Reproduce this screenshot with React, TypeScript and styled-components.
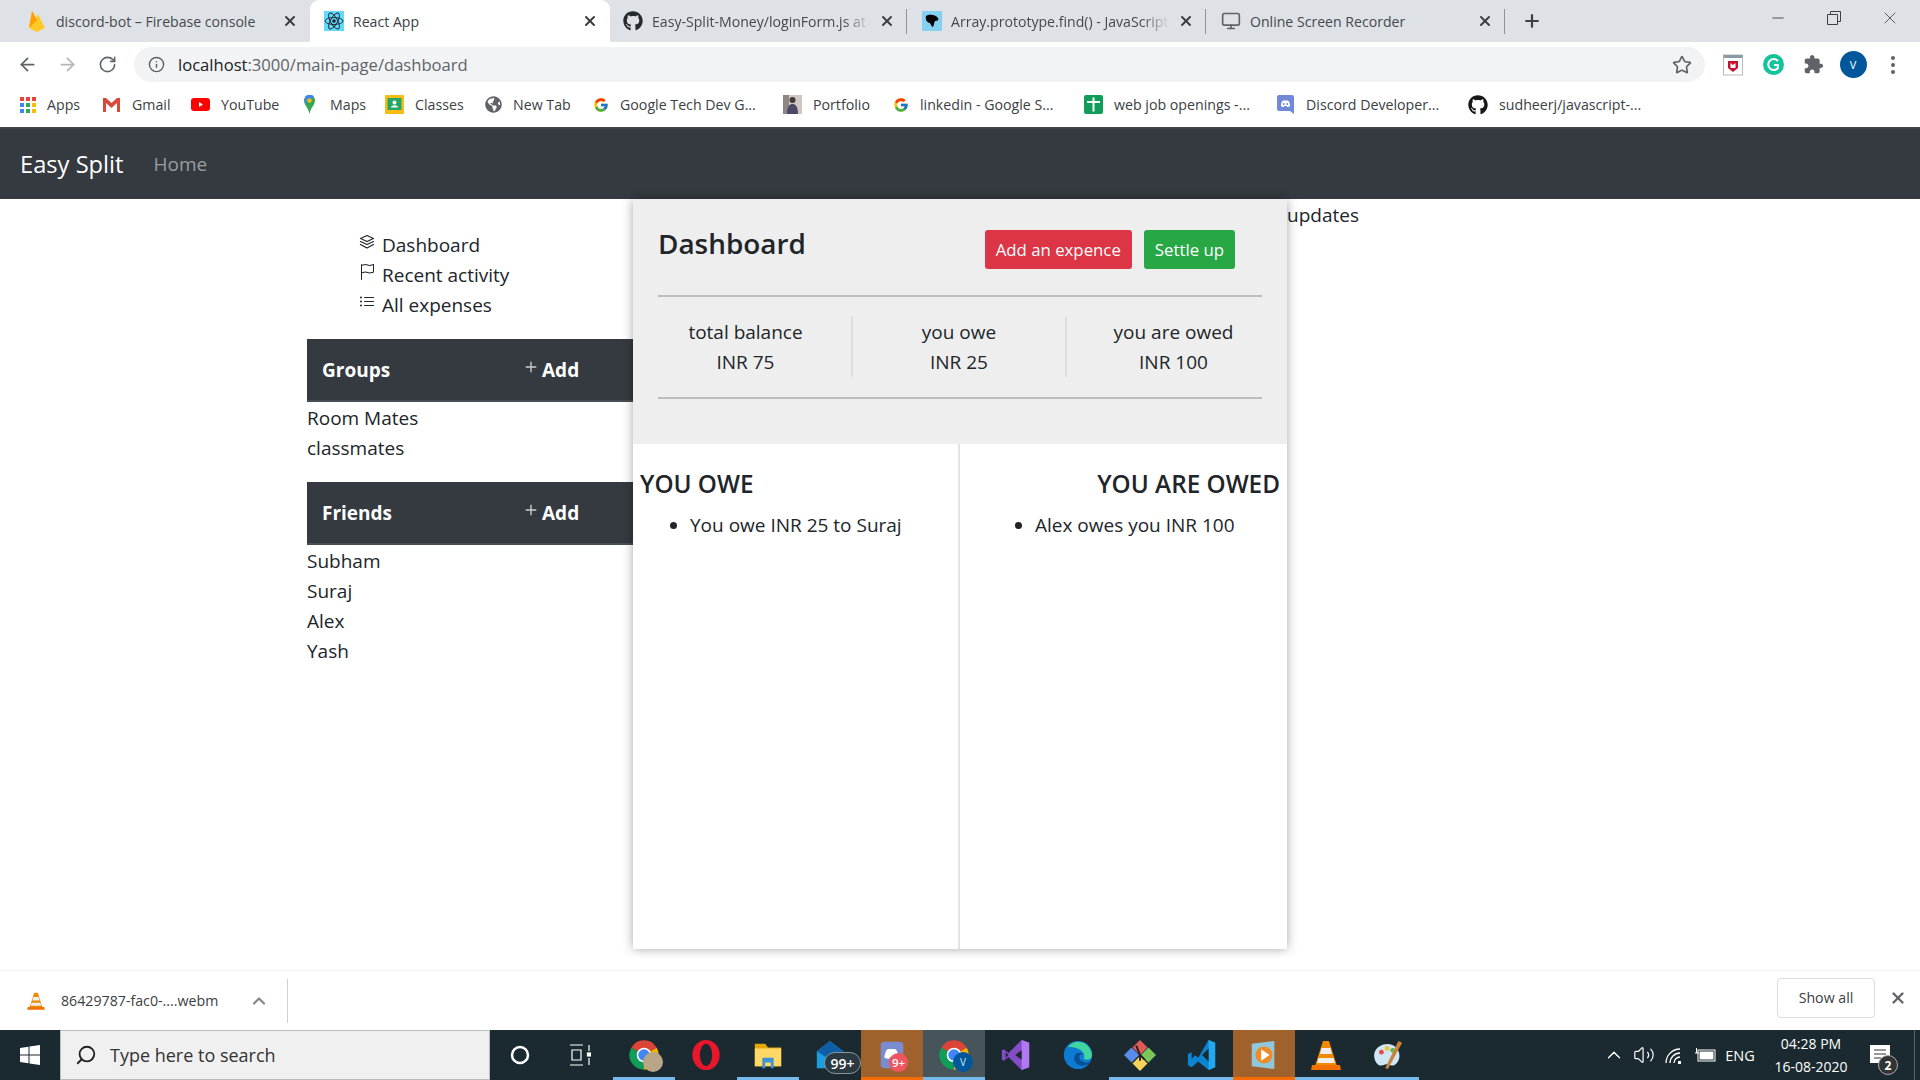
import React from 'react';
import styled, { createGlobalStyle } from 'styled-components';
import { BsFlag, BsListUl, BsPlus } from 'react-icons/bs';
import { FaGithub, FaGlobeAmericas } from 'react-icons/fa';
import { FcGoogle } from 'react-icons/fc';
import {
  ArrowLeft,
  ArrowRight,
  RotateCw,
  Info,
  Star,
  X,
  Plus,
  Minus,
  ChevronUp,
  Search,
  Monitor,
  Volume2,
} from 'lucide-react';

const GlobalStyle = createGlobalStyle`
  html, body {
    margin: 0;
    padding: 0;
    width: 1920px;
    height: 1080px;
    overflow: hidden;
    background: #fff;
    font-family: "Open Sans", "Noto Sans", sans-serif;
    color: #212529;
  }
  * {
    box-sizing: border-box;
  }
`;

/* browser chrome */

const Shell = styled.div`
  width: 1920px;
  height: 1080px;
  display: flex;
  flex-direction: column;
  overflow: hidden;
`;

const TabStrip = styled.div`
  height: 42px;
  flex: none;
  display: flex;
  padding-left: 10px;
  background: #dee1e6;
`;

const Tab = styled.div<{ $active?: boolean; $width: number; $pad: number; $divider?: boolean }>`
  width: ${(p) => p.$width}px;
  height: 42px;
  display: flex;
  align-items: center;
  gap: 9px;
  padding: 0 12px 0 ${(p) => p.$pad}px;
  font-size: 14.1px;
  color: ${(p) => (p.$active ? '#3c4043' : '#45494d')};
  background: ${(p) => (p.$active ? '#fff' : 'transparent')};
  border-radius: 9px 9px 0 0;
  position: relative;

  &::after {
    content: '';
    display: ${(p) => (p.$divider ? 'block' : 'none')};
    position: absolute;
    right: 0;
    top: 9px;
    height: 25px;
    width: 1px;
    background: #8f9296;
  }
`;

const TabTitle = styled.span<{ $fade?: boolean }>`
  flex: 1;
  white-space: nowrap;
  ${(p) =>
    p.$fade &&
    'mask-image: linear-gradient(90deg, #000 88%, transparent 100%);'}
`;

const TabClose = styled(X)`
  flex: none;
  width: 16px;
  height: 16px;
  color: #3c4043;
  stroke-width: 3;
`;

const NewTab = styled(Plus)`
  width: 20px;
  height: 20px;
  margin: 11px 0 0 17px;
  color: #3c4043;
  stroke-width: 2.6;
`;

const WindowControls = styled.div`
  margin-left: auto;
  display: flex;
  height: 36px;
  align-items: center;
  padding-right: 2px;
`;

const WindowButton = styled.div`
  width: 56px;
  display: flex;
  justify-content: center;
  color: #3c4043;
`;

const RestoreIcon = styled.svg`
  width: 14px;
  height: 14px;
`;

const Toolbar = styled.div`
  height: 40px;
  flex: none;
  display: flex;
  align-items: center;
  background: #fff;
  padding-top: 5px;
`;

const NavIcon = styled.div<{ $muted?: boolean }>`
  width: 40px;
  display: flex;
  justify-content: center;
  color: ${(p) => (p.$muted ? '#b4b6b9' : '#5f6368')};
  &:first-child {
    margin-left: 7px;
  }
`;

const Omnibox = styled.div`
  width: 1571px;
  height: 35px;
  margin-left: 7px;
  display: flex;
  align-items: center;
  padding: 0 13px 0 14px;
  border-radius: 18px;
  background: #f1f3f4;
  font-size: 16.6px;
  color: #5f6368;
`;

const UrlHost = styled.span`
  color: #202124;
`;

const OmniInfo = styled(Info)`
  width: 17px;
  height: 17px;
  margin-right: 13px;
  color: #5f6368;
`;

const OmniStar = styled(Star)`
  width: 20px;
  height: 20px;
  margin-left: auto;
  color: #5f6368;
`;

const ExtensionRow = styled.div`
  display: flex;
  align-items: center;
  margin-left: 8px;
`;

const ExtensionSlot = styled.div`
  width: 40px;
  display: flex;
  justify-content: center;
  align-items: center;
`;

const Avatar = styled.div`
  width: 27px;
  height: 27px;
  border-radius: 50%;
  background: #01579b;
  color: #fff;
  font-size: 11px;
  display: flex;
  align-items: center;
  justify-content: center;
`;

const Dots = styled.div`
  display: flex;
  flex-direction: column;
  gap: 3px;
  i {
    width: 4px;
    height: 4px;
    border-radius: 50%;
    background: #5f6368;
  }
`;

const BookmarkBar = styled.div`
  height: 47px;
  flex: none;
  display: flex;
  align-items: center;
  padding-left: 20px;
  background: #fff;
  border-bottom: 2px solid #3f4449;
`;

const Bookmark = styled.div<{ $width: number }>`
  width: ${(p) => p.$width}px;
  display: flex;
  align-items: center;
  gap: 11px;
  font-size: 14.2px;
  color: #3c4043;
  white-space: nowrap;
`;

const AppsGrid = styled.div`
  width: 16px;
  height: 16px;
  display: grid;
  grid-template-columns: repeat(3, 4px);
  grid-auto-rows: 4px;
  gap: 2px;
`;

const AppsDot = styled.i<{ $color: string }>`
  background: ${(p) => p.$color};
`;

const BookmarkSvg = styled.svg`
  width: 19px;
  height: 19px;
  flex: none;
`;

/* page */

const Page = styled.div`
  flex: 1;
  min-height: 0;
  display: flex;
  flex-direction: column;
  background: #fff;
`;

const Navbar = styled.nav`
  height: 70px;
  flex: none;
  display: flex;
  align-items: center;
  gap: 30px;
  padding: 0 20px;
  background: #343a40;
`;

const Brand = styled.span`
  font-size: 23.7px;
  color: #fff;
`;

const NavLink = styled.span`
  font-size: 19px;
  color: rgba(255, 255, 255, 0.5);
`;

const Columns = styled.div`
  flex: 1;
  display: grid;
  grid-template-columns: 307px 326px 654px 1fr;
  align-items: start;
`;

const Sidebar = styled.aside`
  grid-column: 2;
  padding-top: 31px;
  font-size: 19px;
`;

const SideMenu = styled.div`
  padding-left: 52px;
  margin-bottom: 19px;
`;

const SideRow = styled.div`
  height: 30px;
  display: flex;
  align-items: center;
  gap: 7px;
  color: #212529;
  svg {
    width: 16px;
    height: 16px;
    margin-top: -7px;
  }
`;

const SectionBar = styled.div`
  height: 63px;
  display: grid;
  grid-template-columns: 198px 1fr;
  align-items: center;
  padding-left: 15px;
  background: #343a40;
  border-bottom: 2px solid #454d55;
  color: #fff;
  font-weight: 700;
  font-size: 19px;
`;

const AddLabel = styled.span`
  display: flex;
  align-items: center;
  svg {
    width: 22px;
    height: 22px;
    margin-top: -6px;
    color: #ccc;
  }
`;

const NameList = styled.div<{ $spaced?: boolean }>`
  padding-top: 1px;
  margin-bottom: ${(p) => (p.$spaced ? '19px' : '0')};
`;

const NameRow = styled.div`
  height: 30px;
  line-height: 30px;
`;

const Panel = styled.main`
  grid-column: 3;
  height: 750px;
  display: flex;
  flex-direction: column;
  position: relative;
  z-index: 1;
  background: #fff;
  box-shadow: 0 0 10px rgba(0, 0, 0, 0.35);
  font-size: 19px;
`;

const PanelHead = styled.div`
  height: 245px;
  flex: none;
  padding: 31px 25px 0;
  background: #eee;
`;

const HeadRow = styled.div`
  height: 67px;
  display: flex;
  align-items: flex-start;
  border-bottom: 2px solid #bdbdbd;
`;

const PanelTitle = styled.h2`
  margin: -5px 0 0;
  font-size: 27.9px;
  line-height: 36px;
  font-weight: 600;
  color: #212529;
`;

const ActionButton = styled.button<{ $bg: string }>`
  height: 39px;
  padding: 0 11px;
  margin-left: 12px;
  border: 0;
  border-radius: 3px;
  background: ${(p) => p.$bg};
  color: #fff;
  font: inherit;
  font-size: 16.8px;
  white-space: nowrap;
  &:first-of-type {
    margin-left: auto;
  }
  &:last-of-type {
    margin-right: 27px;
  }
`;

const StatsBox = styled.div`
  height: 102px;
  display: flex;
  align-items: center;
  border-bottom: 2px solid #bdbdbd;
`;

const Stats = styled.div`
  flex: 1;
  margin: 0 -18px;
  display: grid;
  grid-template-columns: 213px 214px 213px;
  align-items: center;
`;

const Stat = styled.div`
  height: 60px;
  display: flex;
  flex-direction: column;
  align-items: center;
  justify-content: center;
  line-height: 30px;
  border-right: 2px solid #ddd;
  &:last-child {
    border-right: 0;
  }
`;

const Split = styled.div`
  flex: 1;
  display: grid;
  grid-template-columns: 1fr 1fr;
`;

const SplitCol = styled.div<{ $right?: boolean }>`
  padding: 24px 7px 0;
  text-align: ${(p) => (p.$right ? 'right' : 'left')};
  border-right: ${(p) => (p.$right ? '0' : '2px solid #e3e3e3')};
`;

const SplitTitle = styled.h4`
  margin: 0 0 10px;
  font-size: 24.3px;
  line-height: 32px;
  font-weight: 600;
`;

const OweList = styled.ul<{ $right?: boolean }>`
  margin: 0;
  padding-left: ${(p) => (p.$right ? '68px' : '50px')};
  text-align: left;
  line-height: 30px;
`;

const Updates = styled.div`
  grid-column: 4;
  padding-top: 1px;
  font-size: 19px;
  line-height: 30px;
`;

/* download shelf */

const Shelf = styled.div`
  height: 81px;
  flex: none;
  display: flex;
  align-items: flex-end;
  background: #fff;
`;

const ShelfInner = styled.div`
  width: 100%;
  height: 60px;
  display: flex;
  align-items: center;
  padding-left: 26px;
  border-top: 1px solid #f4f4f4;
  font-size: 14.2px;
  color: #3c4043;
`;

const ShelfName = styled.span`
  margin-left: 15px;
  width: 188px;
`;

const ShelfChevron = styled(ChevronUp)`
  width: 20px;
  height: 20px;
  color: #80868b;
  stroke-width: 2.6;
`;

const ShelfDivider = styled.div`
  width: 1px;
  height: 44px;
  margin-left: 18px;
  background: #d0d0d0;
`;

const ShowAll = styled.div`
  width: 98px;
  height: 40px;
  margin-left: auto;
  display: flex;
  align-items: center;
  justify-content: center;
  border: 1px solid #dadce0;
  border-radius: 4px;
  font-weight: 500;
  margin-bottom: 6px;
`;

const ShelfClose = styled(X)`
  width: 18px;
  height: 18px;
  margin: 0 13px 6px 14px;
  color: #5f6368;
  stroke-width: 3;
`;

/* taskbar */

const Taskbar = styled.div`
  height: 50px;
  flex: none;
  display: flex;
  background: #1b2a30;
  color: #fff;
`;

const StartButton = styled.div`
  width: 60px;
  display: flex;
  align-items: center;
  justify-content: center;
`;

const SearchBox = styled.div`
  width: 430px;
  display: flex;
  align-items: center;
  gap: 13px;
  padding-left: 14px;
  background: #f0f0f0;
  border: 1px solid #bcbcbc;
  color: #333;
  font-size: 18px;
`;

const SearchGlass = styled(Search)`
  width: 22px;
  height: 22px;
  transform: scaleX(-1);
  color: #222;
`;

const ShellSlot = styled.div<{ $width: number }>`
  width: ${(p) => p.$width}px;
  flex: none;
  display: flex;
  align-items: center;
  justify-content: center;
`;

const TaskSlot = styled.div<{ $bg?: string; $line?: string }>`
  width: 62px;
  flex: none;
  position: relative;
  display: flex;
  align-items: center;
  justify-content: center;
  background: ${(p) => p.$bg || 'transparent'};
  border-bottom: 3px solid ${(p) => p.$line || 'transparent'};
  padding-top: 3px;
`;

const TaskSvg = styled.svg`
  width: 32px;
  height: 32px;
`;

const CountBadge = styled.span`
  position: absolute;
  right: 0;
  bottom: 3px;
  width: 37px;
  height: 22px;
  border-radius: 11px;
  background: #2a3a40;
  border: 1px solid #8a9599;
  font-size: 14px;
  font-weight: 600;
  color: #fff;
  display: flex;
  align-items: center;
  justify-content: center;
`;

const NineBadge = styled.span`
  position: absolute;
  right: 15px;
  bottom: 5px;
  width: 19px;
  height: 19px;
  border-radius: 50%;
  background: #ee5560;
  font-size: 11.5px;
  font-weight: 600;
  color: #fff;
  display: flex;
  align-items: center;
  justify-content: center;
`;

const AvatarBadge = styled.span<{ $photo?: boolean }>`
  position: absolute;
  right: 12px;
  bottom: 5px;
  width: 20px;
  height: 20px;
  border-radius: 50%;
  background: ${(p) => (p.$photo ? '#b9a588' : '#01579b')};
  font-size: 10px;
  color: #d5e5f2;
  display: flex;
  align-items: center;
  justify-content: center;
`;

const Tray = styled.div`
  margin-left: auto;
  display: flex;
  align-items: center;
  padding-right: 5px;
  color: #fff;
  font-size: 14.5px;
`;

const TraySlot = styled.div<{ $width: number }>`
  width: ${(p) => p.$width}px;
  display: flex;
  justify-content: center;
  svg {
    width: 22px;
    height: 22px;
  }
`;

const Clock = styled.div`
  width: 104px;
  text-align: center;
  line-height: 23px;
  font-size: 14px;
`;

const Notify = styled.div`
  width: 52px;
  height: 50px;
  position: relative;
  display: flex;
  align-items: flex-start;
  padding: 15px 0 0 7px;
  border-right: 1px solid #5b666b;
`;

const NotifyGlyph = styled.svg`
  width: 20px;
  height: 18px;
`;

const NotifyBadge = styled.span`
  position: absolute;
  right: 16px;
  bottom: 5px;
  width: 20px;
  height: 20px;
  border-radius: 50%;
  background: #333;
  border: 1px solid #aaa;
  font-size: 12px;
  font-weight: 700;
  display: flex;
  align-items: center;
  justify-content: center;
`;

/* drawings */

const FirebaseIcon = () => (
  <svg width="20" height="24" viewBox="0 0 20 24">
    <path d="M2 19 5 2l4 7 2-4 7 14-8 4z" fill="#ffca28" />
    <path d="M2 19 5 2l5 9z" fill="#ffa000" />
  </svg>
);

const ReactIcon = () => (
  <svg width="20" height="24" viewBox="0 0 20 24">
    <rect y="2" width="20" height="20" fill="#61dafb" />
    <g fill="none" stroke="#20232a" strokeWidth="0.9">
      <ellipse cx="10" cy="12" rx="9" ry="3.5" />
      <ellipse cx="10" cy="12" rx="9" ry="3.5" transform="rotate(60 10 12)" />
      <ellipse cx="10" cy="12" rx="9" ry="3.5" transform="rotate(120 10 12)" />
    </g>
    <circle cx="10" cy="12" r="1.8" fill="#20232a" />
  </svg>
);

const MdnIcon = () => (
  <svg width="20" height="20" viewBox="0 0 20 20">
    <rect width="20" height="20" fill="#83d0f2" />
    <path d="M4 5c3-2 9-2 12 2 1 2 0 3-3 3-1 2-1 4-2 6-1 0-2-2-3-4C5 12 3 8 4 5z" fill="#000" />
  </svg>
);

const LayersIcon = () => (
  <svg viewBox="0 0 16 16" fill="none" stroke="currentColor" strokeWidth="1.2" strokeLinejoin="round" strokeLinecap="round">
    <path d="M8 1.500 14.500 4.500 8 7.500 1.500 4.500z" />
    <path d="M1.500 7.500 8 10.500 14.500 7.500" />
    <path d="M1.500 10.500 8 14 14.500 10.500" />
  </svg>
);

const ChromeLogo = ({ size = 32 }: { size?: number }) => (
  <svg width={size} height={size} viewBox="0 0 24 24">
    <path d="M12 12 2.47 6.5A11 11 0 0 1 21.53 6.5z" fill="#db4437" />
    <path d="M12 12 21.53 6.5A11 11 0 0 1 12 23z" fill="#f4b400" />
    <path d="M12 12 12 23A11 11 0 0 1 2.47 6.5z" fill="#0f9d58" />
    <circle cx="12" cy="12" r="5.5" fill="#fff" />
    <circle cx="12" cy="12" r="4.3" fill="#4285f4" />
  </svg>
);

function VlcCone({ size }: { size: number }) {
  return (
    <svg width={size} height={size} viewBox="0 0 34 34">
      <path d="M14 3h6l8 25H6z" fill="#f08a00" />
      <path d="M12.500 10h9l1.500 6H11zM9.500 20h15l1.500 5H8z" fill="#eee" />
      <path d="M3 27h28l1 5H2z" fill="#f07000" />
    </svg>
  );
}

const apps = ['#ea4335', '#ea4335', '#ea4335', '#4285f4', '#34a853', '#fbbc05', '#4285f4', '#34a853', '#fbbc05'];

const bookmarks: { label: string; width: number; icon: React.ReactNode }[] = [
  {
    label: 'Apps',
    width: 82,
    icon: (
      <AppsGrid>
        {apps.map((c, i) => (
          <AppsDot key={i} $color={c} />
        ))}
      </AppsGrid>
    ),
  },
  {
    label: 'Gmail',
    width: 89,
    icon: (
      <BookmarkSvg viewBox="0 0 19 19">
        <path d="M1 3h3l5.5 5L15 3h3v14h-3V8l-5.500 5L4 8v9H1z" fill="#d8493b" />
      </BookmarkSvg>
    ),
  },
  {
    label: 'YouTube',
    width: 109,
    icon: (
      <BookmarkSvg viewBox="0 0 19 19">
        <rect y="3" width="19" height="13" rx="3" fill="#f00" />
        <path d="M8 7l4 2.500-4 2.500z" fill="#fff" />
      </BookmarkSvg>
    ),
  },
  {
    label: 'Maps',
    width: 85,
    icon: (
      <BookmarkSvg viewBox="0 0 19 19">
        <path d="M9.500 0C6 0 4 2.500 4 5.500 4 10 8 12 9.500 19 11 12 15 10 15 5.500 15 2.500 13 0 9.500 0z" fill="#34a853" />
        <path d="M5 2a6 6 0 0 1 9-.5L5 9z" fill="#4285f4" />
        <circle cx="9.500" cy="5.500" r="2.200" fill="#fbbc05" />
      </BookmarkSvg>
    ),
  },
  {
    label: 'Classes',
    width: 100,
    icon: (
      <BookmarkSvg viewBox="0 0 19 19">
        <rect width="19" height="19" rx="1" fill="#f9bc15" />
        <rect x="2.500" y="3" width="14" height="12" fill="#25a667" />
        <circle cx="9.500" cy="7.500" r="2" fill="#fff" />
        <path d="M6 12.500c0-3 7-3 7 0z" fill="#fff" />
      </BookmarkSvg>
    ),
  },
  { label: 'New Tab', width: 108, icon: <FaGlobeAmericas size={17} color="#5f6368" /> },
  { label: 'Google Tech Dev G...', width: 190, icon: <FcGoogle size={16} /> },
  {
    label: 'Portfolio',
    width: 110,
    icon: (
      <BookmarkSvg viewBox="0 0 19 19">
        <rect width="19" height="19" fill="#cfc8c2" />
        <rect x="0" y="0" width="6" height="19" fill="#8d8682" />
        <circle cx="9.500" cy="5" r="3" fill="#3f3a3d" />
        <path d="M4 19c0-8 3-10 5.500-10S15 11 15 19z" fill="#4b4766" />
      </BookmarkSvg>
    ),
  },
  { label: 'linkedin - Google S...', width: 191, icon: <FcGoogle size={16} /> },
  {
    label: 'web job openings -...',
    width: 192,
    icon: (
      <BookmarkSvg viewBox="0 0 19 19">
        <rect width="19" height="19" rx="2" fill="#0f9d58" />
        <path d="M3 6h5.500V2.500h2V6H16v2h-5.500v8.500h-2V8H3z" fill="#fff" />
      </BookmarkSvg>
    ),
  },
  {
    label: 'Discord Developer...',
    width: 192,
    icon: (
      <BookmarkSvg viewBox="0 0 19 19">
        <path d="M3 0h13a2 2 0 0 1 2 2v17l-4-3H3a2 2 0 0 1-2-2V2a2 2 0 0 1 2-2z" fill="#7289da" />
        <path d="M5 11c0-3 1-5 2-5.500h5c1 .5 2 2.500 2 5.500-1 1-2 1-3 1v-1H8v1c-1 0-2 0-3-1z" fill="#fff" />
        <circle cx="7.800" cy="9" r="1" fill="#7289da" />
        <circle cx="11.200" cy="9" r="1" fill="#7289da" />
      </BookmarkSvg>
    ),
  },
  { label: 'sudheerj/javascript-...', width: 200, icon: <FaGithub size={20} color="#181717" /> },
];

const tasks: { key: string; bg?: string; line?: string; badge?: React.ReactNode; icon: React.ReactNode }[] = [
  { key: 'chrome-user', line: '#76b9ed', badge: <AvatarBadge $photo />, icon: <ChromeLogo /> },
  {
    key: 'opera',
    icon: (
      <TaskSvg viewBox="0 0 34 34">
        <ellipse cx="17" cy="17" rx="14.500" ry="16" fill="#e8172b" />
        <ellipse cx="17" cy="17" rx="6.500" ry="12" fill="#1b2a30" />
      </TaskSvg>
    ),
  },
  {
    key: 'explorer',
    line: '#76b9ed',
    icon: (
      <TaskSvg viewBox="0 0 34 34">
        <path d="M3 5h11l3 4h14v20H3z" fill="#e6a800" />
        <rect x="3" y="10" width="28" height="19" fill="#ffd866" />
        <path d="M11 31V20h12v11h-3v-6h-6v6z" fill="#3e94d9" />
      </TaskSvg>
    ),
  },
  {
    key: 'mail',
    badge: <CountBadge>99+</CountBadge>,
    icon: (
      <TaskSvg viewBox="0 0 34 34">
        <path d="M3 13 17 2l14 11v18H3z" fill="#1b9de2" />
        <path d="M3 13 17 2l14 11-14 9z" fill="#0e5ea8" />
      </TaskSvg>
    ),
  },
  {
    key: 'discord',
    bg: '#a0622d',
    line: '#f76b00',
    badge: <NineBadge>9+</NineBadge>,
    icon: (
      <TaskSvg viewBox="0 0 34 34">
        <rect x="5" y="3" width="24" height="28" rx="4" fill="#7a8ccf" />
        <path d="M9 20c0-5 2-9 4-9.500h7c2 .5 4 4.500 4 9.500-2 1-3 1-5 1l-1-2h-3l-1 2c-2 0-3 0-5-1z" fill="#fff" />
      </TaskSvg>
    ),
  },
  {
    key: 'chrome',
    bg: '#47555a',
    line: '#76b9ed',
    badge: <AvatarBadge>V</AvatarBadge>,
    icon: <ChromeLogo />,
  },
  {
    key: 'vs',
    icon: (
      <TaskSvg viewBox="0 0 34 34">
        <path d="M23 1 31 4v26l-8 3L9 19l-5 4-2-1V12l2-1 5 4z" fill="#854cc7" />
        <path d="M23 1 31 4v26l-8 3z" fill="#b179f1" />
        <path d="M6 14v6l3-3zM16 17l7 5V12z" fill="#1b2a30" />
      </TaskSvg>
    ),
  },
  {
    key: 'edge',
    icon: (
      <TaskSvg viewBox="0 0 34 34">
        <circle cx="17" cy="17" r="15" fill="#0c7bd1" />
        <path d="M6 9C12-1 30 1 32 17c0 5-6 6-9 4 4-8-10-14-17-12z" fill="#3fd4a0" />
        <path d="M13 20c0-5 6-7 10-4-6-1-6 6-1 8 3 2 7 1 9-1-3 7-18 8-18-3z" fill="#0a4f96" />
      </TaskSvg>
    ),
  },
  {
    key: 'git',
    line: '#76b9ed',
    icon: (
      <TaskSvg viewBox="0 0 34 34">
        <path d="M17 1l8 8-8 8-8-8z" fill="#e05a5a" />
        <path d="M26 9l8 8-8 8-8-8z" fill="#7bc75a" />
        <path d="M17 18l8 8-8 8-8-8z" fill="#f3d35a" />
        <path d="M8 9l8 8-8 8-8-8z" fill="#5a8bea" />
        <path d="M13 7l4 10 5 5M17 17v6" stroke="#222" strokeWidth="2" fill="none" />
      </TaskSvg>
    ),
  },
  {
    key: 'vscode',
    line: '#76b9ed',
    icon: (
      <TaskSvg viewBox="0 0 34 34">
        <path d="M24 1l7 3v26l-7 3-11-9-7 6-4-2v-12l4-2 7 6z" fill="#0a84d0" />
        <path d="M24 1l7 3v26l-7 3z" fill="#22a7f0" />
        <path d="M6 13v8l4-4zM24 10l-7 7 7 7z" fill="#1b2a30" />
      </TaskSvg>
    ),
  },
  {
    key: 'wmp',
    bg: '#a0622d',
    line: '#f76b00',
    icon: (
      <TaskSvg viewBox="0 0 34 34">
        <path d="M4 5l24-3v30L4 29z" fill="#8fc7dc" />
        <circle cx="17" cy="17" r="9" fill="#ef8a25" />
        <path d="M14 11l9 6-9 6z" fill="#fff" />
      </TaskSvg>
    ),
  },
  {
    key: 'vlc',
    line: '#76b9ed',
    icon: <VlcCone size={34} />,
  },
  {
    key: 'paint',
    line: '#76b9ed',
    icon: (
      <TaskSvg viewBox="0 0 34 34">
        <path d="M3 22C-1 10 12 3 21 6c8 3 11 13 5 20-5 5-8 0-12 1-5 2-8 2-11-5z" fill="#cfe6f5" />
        <circle cx="10" cy="14" r="2.500" fill="#e8483f" />
        <circle cx="16" cy="10" r="2.500" fill="#f2c230" />
        <circle cx="22" cy="12" r="2.500" fill="#5bb84a" />
        <path d="M28 2 32 4 17 32l-3-1z" fill="#c9823a" />
      </TaskSvg>
    ),
  },
];

const App = () => {
  return (
    <Shell>
      <GlobalStyle />
      <TabStrip>
        <Tab $width={300} $pad={17}>
          <FirebaseIcon />
          <TabTitle>discord-bot – Firebase console</TabTitle>
          <TabClose />
        </Tab>
        <Tab $active $width={300} $pad={14}>
          <ReactIcon />
          <TabTitle>React App</TabTitle>
          <TabClose />
        </Tab>
        <Tab $width={297} $pad={13} $divider>
          <FaGithub size={20} color="#24292e" />
          <TabTitle $fade>Easy-Split-Money/loginForm.js at</TabTitle>
          <TabClose />
        </Tab>
        <Tab $width={299} $pad={15} $divider>
          <MdnIcon />
          <TabTitle $fade>Array.prototype.find() - JavaScript</TabTitle>
          <TabClose />
        </Tab>
        <Tab $width={299} $pad={15} $divider>
          <Monitor size={20} color="#5f6368" />
          <TabTitle>Online Screen Recorder</TabTitle>
          <TabClose />
        </Tab>
        <NewTab />
        <WindowControls>
          <WindowButton>
            <Minus size={18} strokeWidth={1.2} />
          </WindowButton>
          <WindowButton>
            <RestoreIcon viewBox="0 0 14 14">
              <path d="M3.500 3.500V.5h10v10h-3M.5 3.500h10v10H.5z" fill="none" stroke="#3c4043" />
            </RestoreIcon>
          </WindowButton>
          <WindowButton>
            <X size={20} strokeWidth={1} />
          </WindowButton>
        </WindowControls>
      </TabStrip>

      <Toolbar>
        <NavIcon>
          <ArrowLeft size={21} />
        </NavIcon>
        <NavIcon $muted>
          <ArrowRight size={21} />
        </NavIcon>
        <NavIcon>
          <RotateCw size={19} />
        </NavIcon>
        <Omnibox>
          <OmniInfo />
          <span>
            <UrlHost>localhost</UrlHost>:3000/main-page/dashboard
          </span>
          <OmniStar />
        </Omnibox>
        <ExtensionRow>
          <ExtensionSlot>
            <svg width="20" height="22" viewBox="0 0 20 22">
              <rect x="0.500" y="1" width="19" height="20" fill="#fff" stroke="#bbb" />
              <rect x="0.500" y="1" width="19" height="3" fill="#8a9aa5" />
              <path d="M5 7h10v7l-5 4-5-4z" fill="#c8102e" />
              <path d="M7.500 9v5h5V9l-2.500 2z" fill="#fff" />
            </svg>
          </ExtensionSlot>
          <ExtensionSlot>
            <svg width="21" height="21" viewBox="0 0 21 21">
              <circle cx="10.500" cy="10.500" r="10.500" fill="#15c39a" />
              <path d="M15 7a5.500 5.500 0 1 0 0 7l-.2-3H11" fill="none" stroke="#fff" strokeWidth="2" />
            </svg>
          </ExtensionSlot>
          <ExtensionSlot>
            <svg width="21" height="21" viewBox="0 0 24 24">
              <path
                d="M20.500 11H19V7c0-1.100-.9-2-2-2h-4V3.500C13 2.120 11.880 1 10.500 1S8 2.120 8 3.500V5H4c-1.100 0-1.990.9-1.990 2v3.800H3.500c1.490 0 2.700 1.210 2.700 2.700s-1.210 2.700-2.700 2.700H2V20c0 1.100.9 2 2 2h3.800v-1.500c0-1.490 1.210-2.700 2.700-2.700 1.490 0 2.700 1.210 2.700 2.700V22H17c1.100 0 2-.9 2-2v-4h1.500c1.380 0 2.500-1.120 2.500-2.500S21.880 11 20.500 11z"
                fill="#5f6368"
              />
            </svg>
          </ExtensionSlot>
          <ExtensionSlot>
            <Avatar>V</Avatar>
          </ExtensionSlot>
          <ExtensionSlot>
            <Dots>
              <i />
              <i />
              <i />
            </Dots>
          </ExtensionSlot>
        </ExtensionRow>
      </Toolbar>

      <BookmarkBar>
        {bookmarks.map((b) => (
          <Bookmark key={b.label} $width={b.width}>
            {b.icon}
            <span>{b.label}</span>
          </Bookmark>
        ))}
      </BookmarkBar>

      <Page>
        <Navbar>
          <Brand>Easy Split</Brand>
          <NavLink>Home</NavLink>
        </Navbar>
        <Columns>
          <Sidebar>
            <SideMenu>
              <SideRow>
                <LayersIcon />
                Dashboard
              </SideRow>
              <SideRow>
                <BsFlag />
                Recent activity
              </SideRow>
              <SideRow>
                <BsListUl />
                All expenses
              </SideRow>
            </SideMenu>
            <SectionBar>
              <span>Groups</span>
              <AddLabel>
                <BsPlus />
                Add
              </AddLabel>
            </SectionBar>
            <NameList $spaced>
              <NameRow>Room Mates</NameRow>
              <NameRow>classmates</NameRow>
            </NameList>
            <SectionBar>
              <span>Friends</span>
              <AddLabel>
                <BsPlus />
                Add
              </AddLabel>
            </SectionBar>
            <NameList>
              <NameRow>Subham</NameRow>
              <NameRow>Suraj</NameRow>
              <NameRow>Alex</NameRow>
              <NameRow>Yash</NameRow>
            </NameList>
          </Sidebar>

          <Panel>
            <PanelHead>
              <HeadRow>
                <PanelTitle>Dashboard</PanelTitle>
                <ActionButton $bg="#dc3545">Add an expence</ActionButton>
                <ActionButton $bg="#28a745">Settle up</ActionButton>
              </HeadRow>
              <StatsBox>
                <Stats>
                  <Stat>
                    <span>total balance</span>
                    <span>INR 75</span>
                  </Stat>
                  <Stat>
                    <span>you owe</span>
                    <span>INR 25</span>
                  </Stat>
                  <Stat>
                    <span>you are owed</span>
                    <span>INR 100</span>
                  </Stat>
                </Stats>
              </StatsBox>
            </PanelHead>
            <Split>
              <SplitCol>
                <SplitTitle>YOU OWE</SplitTitle>
                <OweList>
                  <li>You owe INR 25 to Suraj</li>
                </OweList>
              </SplitCol>
              <SplitCol $right>
                <SplitTitle>YOU ARE OWED</SplitTitle>
                <OweList $right>
                  <li>Alex owes you INR 100</li>
                </OweList>
              </SplitCol>
            </Split>
          </Panel>
          <Updates>updates</Updates>
        </Columns>
      </Page>

      <Shelf>
        <ShelfInner>
          <VlcCone size={20} />
          <ShelfName>86429787-fac0-....webm</ShelfName>
          <ShelfChevron />
          <ShelfDivider />
          <ShowAll>Show all</ShowAll>
          <ShelfClose />
        </ShelfInner>
      </Shelf>

      <Taskbar>
        <StartButton>
          <svg width="20" height="20" viewBox="0 0 20 20">
            <path d="M0 3l8.500-1.200V9.500H0zM9.500 1.600 20 0v9.500H9.500zM0 10.500h8.500v7.700L0 17zM9.500 10.500H20V20L9.500 18.400z" fill="#fff" />
          </svg>
        </StartButton>
        <SearchBox>
          <SearchGlass />
          Type here to search
        </SearchBox>
        <ShellSlot $width={60}>
          <svg width="22" height="22" viewBox="0 0 22 22">
            <circle cx="11" cy="11" r="8" fill="none" stroke="#fff" strokeWidth="2.500" />
          </svg>
        </ShellSlot>
        <ShellSlot $width={60}>
          <svg width="22" height="22" viewBox="0 0 22 22" fill="none" stroke="#fff" strokeWidth="1.200">
            <path d="M1 1h13M1 21h13M3 6h9v10H3zM20 1v6M20 14v7" />
            <rect x="18.500" y="9" width="3" height="3" fill="#fff" />
          </svg>
        </ShellSlot>
        <ShellSlot $width={3} />
        {tasks.map((t) => (
          <TaskSlot key={t.key} $bg={t.bg} $line={t.line}>
            {t.icon}
            {t.badge}
          </TaskSlot>
        ))}
        <Tray>
          <TraySlot $width={30}>
            <ChevronUp strokeWidth={1.500} />
          </TraySlot>
          <TraySlot $width={30}>
            <Volume2 strokeWidth={1.300} />
          </TraySlot>
          <TraySlot $width={30}>
            <svg viewBox="0 0 22 22" fill="none" stroke="#fff" strokeWidth="1.300">
              <path d="M3 19a14 14 0 0 1 14-14M7 19a10 10 0 0 1 10-10M11 19a6 6 0 0 1 6-6" />
              <rect x="15" y="17" width="3" height="3" fill="#fff" stroke="none" />
            </svg>
          </TraySlot>
          <TraySlot $width={32}>
            <svg viewBox="0 0 22 22" fill="none" stroke="#fff">
              <rect x="4" y="6" width="17" height="11" />
              <rect x="6" y="8" width="13" height="7" fill="#fff" />
              <path d="M1 9h4M2.500 4v5" />
            </svg>
          </TraySlot>
          <TraySlot $width={38}>ENG</TraySlot>
          <Clock>
            04:28 PM
            <br />
            16-08-2020
          </Clock>
          <Notify>
            <NotifyGlyph viewBox="0 0 20 18">
              <path d="M0 0h20v18H0z" fill="#fff" />
              <path d="M4 5h12M4 9h12M4 13h7" stroke="#333" />
            </NotifyGlyph>
            <NotifyBadge>2</NotifyBadge>
          </Notify>
        </Tray>
      </Taskbar>
    </Shell>
  );
};

export default App;
